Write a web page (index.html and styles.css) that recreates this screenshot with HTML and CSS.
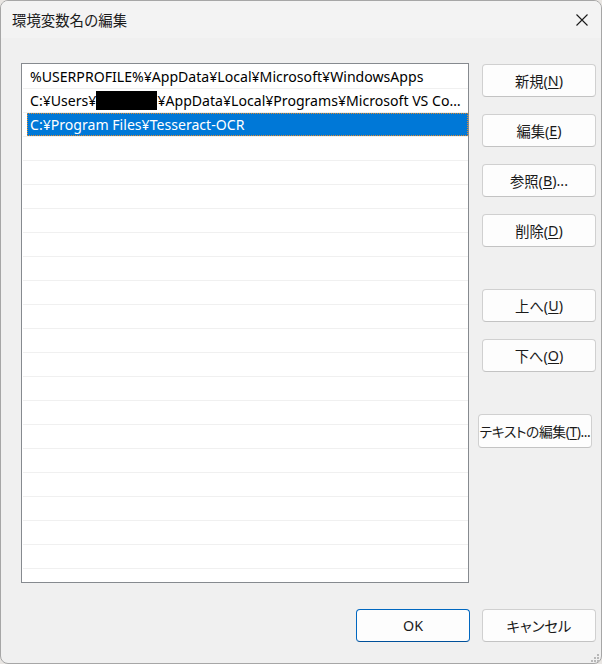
FILE: index.html
```html
<!DOCTYPE html>
<html lang="ja">
<head>
<meta charset="utf-8">
<title>環境変数名の編集</title>
<link rel="stylesheet" href="styles.css">
</head>
<body>
<div class="window">
  <div class="titlebar">
    <span class="title">環境変数名の編集</span>
    <svg class="close" width="12" height="12" viewBox="0 0 12 12"><path d="M0.5 0.5 L11.5 11.5 M11.5 0.5 L0.5 11.5" stroke="#1a1a1a" stroke-width="1.1" fill="none"/></svg>
  </div>
  <div class="main">
    <div class="list">
      <div class="row"><span class="cell">%USERPROFILE%¥AppData¥Local¥Microsoft¥WindowsApps</span></div>
      <div class="row"><span class="cell">C:¥Users¥<span class="redact"></span>¥AppData¥Local¥Programs¥Microsoft VS Code¥bin</span></div>
      <div class="row selected"><span class="cell">C:¥Program Files¥Tesseract-OCR</span></div>
      <div class="row"><span class="cell"></span></div>
      <div class="row"><span class="cell"></span></div>
      <div class="row"><span class="cell"></span></div>
      <div class="row"><span class="cell"></span></div>
      <div class="row"><span class="cell"></span></div>
      <div class="row"><span class="cell"></span></div>
      <div class="row"><span class="cell"></span></div>
      <div class="row"><span class="cell"></span></div>
      <div class="row"><span class="cell"></span></div>
      <div class="row"><span class="cell"></span></div>
      <div class="row"><span class="cell"></span></div>
      <div class="row"><span class="cell"></span></div>
      <div class="row"><span class="cell"></span></div>
      <div class="row"><span class="cell"></span></div>
      <div class="row"><span class="cell"></span></div>
      <div class="row"><span class="cell"></span></div>
      <div class="row"><span class="cell"></span></div>
      <div class="row"><span class="cell"></span></div>
      <div class="row"><span class="cell"></span></div>
    </div>
    <div class="buttons">
      <button class="btn">新規(<u>N</u>)</button>
      <button class="btn">編集(<u>E</u>)</button>
      <button class="btn">参照(<u>B</u>)...</button>
      <button class="btn">削除(<u>D</u>)</button>
      <button class="btn group">上へ(<u>U</u>)</button>
      <button class="btn">下へ(<u>O</u>)</button>
      <button class="btn wide group">テキストの編集(<u>T</u>)...</button>
    </div>
  </div>
  <div class="footer">
    <button class="btn primary">OK</button>
    <button class="btn">キャンセル</button>
  </div>
  <div class="grip">
    <i class="d1"></i><i class="d2"></i><i class="d3"></i><i class="d4"></i><i class="d5"></i><i class="d6"></i>
  </div>
</div>
</body>
</html>
```
FILE: styles.css
```css
html, body {
  margin: 0;
  padding: 0;
  background: #e9e6e3;
}
body {
  width: 602px;
  height: 664px;
  overflow: hidden;
  font-family: "Noto Sans", "Noto Sans CJK JP", sans-serif;
  font-feature-settings: "palt";
  color: #000;
}
.window {
  position: relative;
  width: 602px;
  height: 664px;
  box-sizing: border-box;
  border: 1px solid #a6a6a6;
  border-radius: 8px;
  background: #f0f0f0;
  display: flex;
  flex-direction: column;
  overflow: hidden;
}
.titlebar {
  height: 37px;
  flex: none;
  background: #f3f3f3;
  display: flex;
  align-items: center;
  justify-content: space-between;
  padding: 0 13px 0 11px;
}
.title {
  font-family: "Noto Sans CJK JP", sans-serif;
  font-size: 14.4px;
  color: #1a1a1a;
  font-feature-settings: normal;
}
.close {
  display: block;
}
.main {
  display: flex;
  align-items: flex-start;
  padding: 25px 0 0 20px;
  gap: 13px;
}
.list {
  width: 448px;
  height: 520px;
  box-sizing: border-box;
  border: 1px solid #868a8f;
  background: #fff;
  padding-top: 1px;
  overflow: hidden;
  flex: none;
}
.row {
  height: 23px;
  margin-left: 1px;
  border-bottom: 1px solid #f0f0f0;
  display: flex;
}
.cell {
  flex: 1;
  min-width: 0;
  margin-left: 4px;
  padding-left: 3px;
  padding-right: 3px;
  font-size: 14.1px;
  line-height: 23px;
  white-space: nowrap;
  overflow: hidden;
  text-overflow: ellipsis;
}
.selected .cell {
  background: #0078d7;
  color: #fff;
  outline: 1px dotted #e08a2c;
  outline-offset: -1px;
}
.redact {
  display: inline-block;
  width: 61px;
  height: 19px;
  background: #000;
  vertical-align: -4px;
}
.buttons {
  display: flex;
  flex-direction: column;
  align-items: flex-start;
  gap: 17px;
  padding-top: 1px;
}
.btn {
  width: 114px;
  height: 33px;
  box-sizing: border-box;
  border: 1px solid #d0d0d0;
  border-bottom-color: #c3c3c3;
  border-radius: 4px;
  background: #fdfdfd;
  font-family: "Noto Sans", "Noto Sans CJK JP", sans-serif;
  font-feature-settings: "palt";
  font-size: 14.3px;
  color: #1a1a1a;
  padding: 0;
  white-space: nowrap;
  display: flex;
  align-items: center;
  justify-content: center;
}
.btn u {
  text-underline-offset: 2px;
}
.group {
  margin-top: 25px;
}
.wide {
  margin-left: -4px;
  height: 34px;
  font-size: 13.8px;
  letter-spacing: -0.4px;
}
.footer {
  display: flex;
  justify-content: flex-end;
  gap: 12px;
  padding: 26px 5px 0 0;
}
.primary {
  border: 1px solid #0067c0;
  border-bottom-color: #00509a;
}
.grip {
  position: absolute;
  right: 2px;
  bottom: 1px;
  width: 8px;
  height: 8px;
}
.grip i {
  position: absolute;
  width: 2px;
  height: 2px;
  background: #b8b8b8;
}
.grip .d1 { right: 0; top: 0; }
.grip .d2 { right: 0; top: 3px; }
.grip .d3 { right: 3px; top: 3px; }
.grip .d4 { right: 0; top: 6px; }
.grip .d5 { right: 3px; top: 6px; }
.grip .d6 { right: 6px; top: 6px; }
```
